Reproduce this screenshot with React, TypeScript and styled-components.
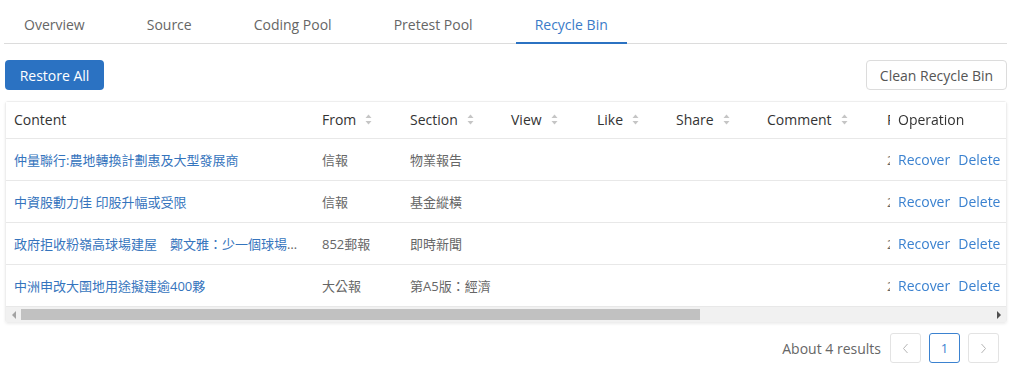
import React from 'react';
import styled, { createGlobalStyle } from 'styled-components';

type Row = {
  title: string;
  from: string;
  section: string;
  date: string;
};

const tabs = ['Overview', 'Source', 'Coding Pool', 'Pretest Pool', 'Recycle Bin'];

const columns = [
  { label: 'Content', width: 308, sortable: false },
  { label: 'From', width: 88, sortable: true },
  { label: 'Section', width: 101, sortable: true },
  { label: 'View', width: 86, sortable: true },
  { label: 'Like', width: 79, sortable: true },
  { label: 'Share', width: 91, sortable: true },
  { label: 'Comment', width: 120, sortable: true },
  { label: 'Publish Date', width: 200, sortable: true },
  { label: 'Deleted At', width: 240, sortable: true },
];

const OP_WIDTH = 116;
const VISIBLE_WIDTH = 1000;
const tableWidth = columns.reduce((s, c) => s + c.width, 0) + OP_WIDTH;

const rows: Row[] = [
  { title: '仲量聯行:農地轉換計劃惠及大型發展商', from: '信報', section: '物業報告', date: '2021-06-18' },
  { title: '中資股動力佳 印股升幅或受限', from: '信報', section: '基金縱橫', date: '2021-06-18' },
  { title: '政府拒收粉嶺高球場建屋　鄭文雅：少一個球場影響大', from: '852郵報', section: '即時新聞', date: '2021-06-18' },
  { title: '中洲申改大圍地用途擬建逾400夥', from: '大公報', section: '第A5版：經濟', date: '2021-06-18' },
];

const GlobalStyle = createGlobalStyle`
  body {
    margin: 0;
    background: #fff;
    font-family: "Open Sans", "Noto Sans CJK TC", sans-serif;
    color: #333;
  }
`;

const Page = styled.div`
  padding: 0 17px 0 5px;
`;

const TabBar = styled.nav`
  display: flex;
  gap: 24px;
  border-bottom: 1px solid #dcdcdc;
  margin-left: -1px;
  padding-left: 1px;
`;

const Tab = styled.div<{ $active?: boolean }>`
  padding: 14px 19px 7px;
  font-size: 14px;
  line-height: 21px;
  color: ${p => (p.$active ? '#3a7bc8' : '#666')};
  border-bottom: 2px solid ${p => (p.$active ? '#2b72c2' : 'transparent')};
  margin-bottom: -1px;
`;

const Toolbar = styled.div`
  display: flex;
  justify-content: space-between;
  align-items: center;
  margin-top: 16px;
`;

const PrimaryButton = styled.button`
  width: 99px;
  height: 30px;
  border: none;
  border-radius: 4px;
  background: #2b72c2;
  color: #fff;
  font-family: inherit;
  font-size: 14px;
`;

const GhostButton = styled.button`
  width: 141px;
  height: 30px;
  border: 1px solid #dcdcdc;
  border-radius: 4px;
  background: #fff;
  color: #555;
  font-family: inherit;
  font-size: 14px;
`;

const TableCard = styled.div`
  margin-top: 11px;
  border: 1px solid #eee;
  border-radius: 3px;
  box-shadow: 0 1px 3px rgba(0, 0, 0, 0.08);
`;

const Viewport = styled.div`
  overflow: hidden;
`;

const ScrollBar = styled.div`
  display: flex;
  height: 15px;
  background: #f1f1f1;
`;

const ScrollArrow = styled.div<{ $dir: 'left' | 'right'; $disabled?: boolean }>`
  width: 15px;
  display: flex;
  align-items: center;
  justify-content: center;

  &::before {
    content: '';
    border-top: 4px solid transparent;
    border-bottom: 4px solid transparent;
    ${p =>
      p.$dir === 'left'
        ? `border-right: 4px solid ${p.$disabled ? '#a3a3a3' : '#505050'};`
        : `border-left: 4px solid ${p.$disabled ? '#a3a3a3' : '#505050'};`}
  }
`;

const ScrollTrack = styled.div`
  flex: 1;
  padding: 2px 0;
`;

const ScrollThumb = styled.div`
  height: 100%;
  background: #c1c1c1;
`;

const Table = styled.table`
  border-collapse: collapse;
  table-layout: fixed;
`;

const Th = styled.th`
  height: 35px;
  padding: 0 8px 1px;
  text-align: left;
  font-weight: normal;
  font-size: 14px;
  color: #333;
  border-bottom: 1px solid #e8e8e8;
  white-space: nowrap;
  overflow: hidden;
  background: #fff;
`;

const Td = styled.td`
  height: 41px;
  padding: 0 8px;
  font-size: 13px;
  color: #666;
  border-bottom: 1px solid #e8e8e8;
  white-space: nowrap;
  overflow: hidden;
  text-overflow: ellipsis;
  background: #fff;
`;

const FixedTh = styled(Th)`
  position: sticky;
  right: 0;
  padding: 0 0 1px 8px;
  overflow: visible;
  box-shadow: -6px 0 6px -4px rgba(0, 0, 0, 0.15);
`;

const FixedTd = styled(Td)`
  position: sticky;
  right: 0;
  padding: 0 0 0 8px;
  overflow: visible;
  text-overflow: clip;
  box-shadow: -6px 0 6px -4px rgba(0, 0, 0, 0.15);
`;

const TitleLink = styled.a`
  color: #3574bd;
  text-decoration: none;
`;

const ActionLink = styled.a`
  color: #3b82d0;
  font-size: 14px;
  text-decoration: none;
  & + & {
    margin-left: 8px;
  }
`;

const HeaderLabel = styled.span`
  display: inline-flex;
  align-items: center;
  gap: 9px;
`;

const SortIcon = () => (
  <svg width="7" height="11" viewBox="0 0 7 11">
    <path d="M3.5 0.5 L6.5 4 L0.5 4 Z" fill="#c5c5c5" />
    <path d="M3.5 10.5 L6.5 7 L0.5 7 Z" fill="#c5c5c5" />
  </svg>
);

const Footer = styled.div`
  display: flex;
  justify-content: flex-end;
  align-items: center;
  gap: 8px;
  margin-top: 10px;
  padding-right: 8px;
`;

const Total = styled.span`
  font-size: 14px;
  color: #666;
  margin-right: 1px;
`;

const PageButton = styled.button<{ $active?: boolean }>`
  width: 31px;
  height: 30px;
  border: 1px solid ${p => (p.$active ? '#3b82d0' : '#e3e3e3')};
  border-radius: 3px;
  background: #fff;
  color: ${p => (p.$active ? '#3b82d0' : '#aaa')};
  font-family: inherit;
  font-size: 13px;
  display: flex;
  align-items: center;
  justify-content: center;
  padding: 0;
`;

const Chevron = ({ dir }: { dir: 'left' | 'right' }) => (
  <svg width="7" height="11" viewBox="0 0 7 11">
    <path
      d={dir === 'left' ? 'M5.5 1 L1.5 5.5 L5.5 10' : 'M1.5 1 L5.5 5.5 L1.5 10'}
      fill="none"
      stroke="#b5b5b5"
      strokeWidth="1"
    />
  </svg>
);

export default function App() {
  const thumbPct = (VISIBLE_WIDTH / tableWidth) * 100;
  return (
    <Page>
      <GlobalStyle />
      <TabBar>
        {tabs.map(t => (
          <Tab key={t} $active={t === 'Recycle Bin'}>
            {t}
          </Tab>
        ))}
      </TabBar>

      <Toolbar>
        <PrimaryButton>Restore All</PrimaryButton>
        <GhostButton>Clean Recycle Bin</GhostButton>
      </Toolbar>

      <TableCard>
        <Viewport>
          <Table style={{ width: tableWidth }}>
            <colgroup>
              {columns.map(c => (
                <col key={c.label} style={{ width: c.width }} />
              ))}
              <col style={{ width: OP_WIDTH }} />
            </colgroup>
            <thead>
              <tr>
                {columns.map(c => (
                  <Th key={c.label}>
                    <HeaderLabel>
                      {c.label}
                      {c.sortable && <SortIcon />}
                    </HeaderLabel>
                  </Th>
                ))}
                <FixedTh>Operation</FixedTh>
              </tr>
            </thead>
            <tbody>
              {rows.map(r => (
                <tr key={r.title}>
                  <Td>
                    <TitleLink href="#">{r.title}</TitleLink>
                  </Td>
                  <Td>{r.from}</Td>
                  <Td>{r.section}</Td>
                  <Td />
                  <Td />
                  <Td />
                  <Td />
                  <Td>{r.date}</Td>
                  <Td>{r.date}</Td>
                  <FixedTd>
                    <ActionLink href="#">Recover</ActionLink>
                    <ActionLink href="#">Delete</ActionLink>
                  </FixedTd>
                </tr>
              ))}
            </tbody>
          </Table>
        </Viewport>
        <ScrollBar>
          <ScrollArrow $dir="left" $disabled />
          <ScrollTrack>
            <ScrollThumb style={{ width: `${thumbPct}%` }} />
          </ScrollTrack>
          <ScrollArrow $dir="right" />
        </ScrollBar>
      </TableCard>

      <Footer>
        <Total>About 4 results</Total>
        <PageButton>
          <Chevron dir="left" />
        </PageButton>
        <PageButton $active>1</PageButton>
        <PageButton>
          <Chevron dir="right" />
        </PageButton>
      </Footer>
    </Page>
  );
}
